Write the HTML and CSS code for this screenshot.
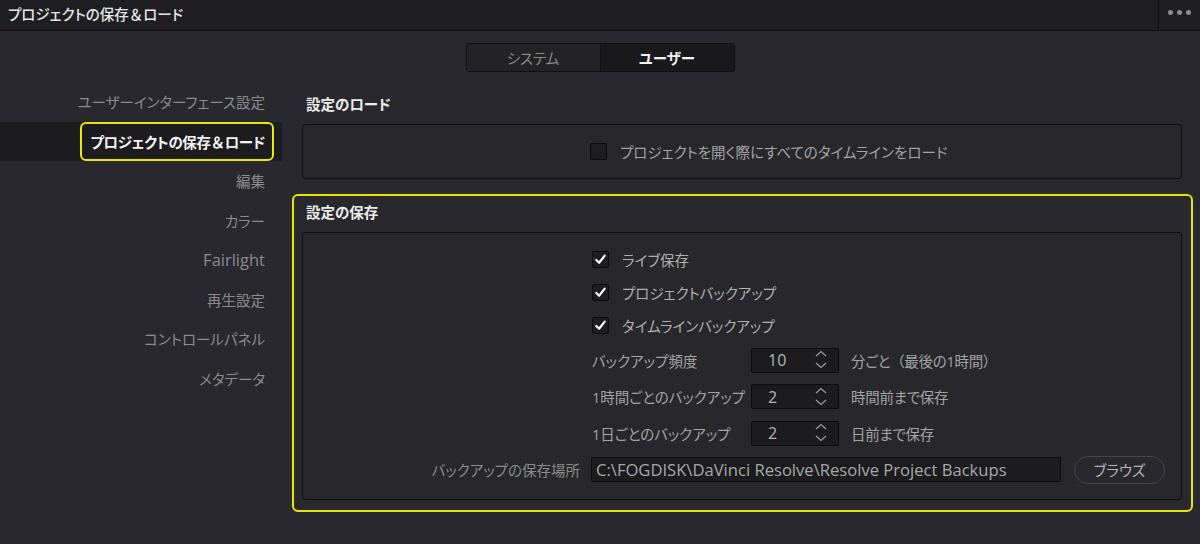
FILE: index.html
```html
<!DOCTYPE html>
<html lang="ja">
<head>
<meta charset="utf-8">
<link rel="stylesheet" href="styles.css">
</head>
<body>
<div class="app">
  <header class="titlebar">
    <div class="title">プロジェクトの保存<span class="amp">＆</span>ロード</div>
    <div class="menu"><span class="dot"></span><span class="dot"></span><span class="dot"></span></div>
  </header>
  <div class="tabs-row">
    <div class="tabs">
      <div class="tab">システム</div>
      <div class="tab active">ユーザー</div>
    </div>
  </div>
  <div class="main">
    <nav class="sidebar">
      <div class="nav-item">ユーザーインターフェース設定</div>
      <div class="nav-item selected"><span class="sel-box">プロジェクトの保存<span class="amp">＆</span>ロード</span></div>
      <div class="nav-item">編集</div>
      <div class="nav-item">カラー</div>
      <div class="nav-item latin">Fairlight</div>
      <div class="nav-item">再生設定</div>
      <div class="nav-item">コントロールパネル</div>
      <div class="nav-item">メタデータ</div>
    </nav>
    <div class="content">
      <section class="section">
        <h2 class="section-title">設定のロード</h2>
        <div class="box box-load">
          <div class="row check-row">
            <div class="label-col"></div>
            <span class="checkbox"></span>
            <span class="check-text">プロジェクトを開く際にすべてのタイムラインをロード</span>
          </div>
        </div>
      </section>
      <section class="section highlight">
        <h2 class="section-title">設定の保存</h2>
        <div class="box box-save">
          <div class="row check-row">
            <div class="label-col"></div>
            <span class="checkbox checked"><svg viewBox="0 0 16 16" class="tick"><path d="M3.5 8.5 L6.5 11.5 L12.5 3.8" /></svg></span>
            <span class="check-text">ライブ保存</span>
          </div>
          <div class="row check-row">
            <div class="label-col"></div>
            <span class="checkbox checked"><svg viewBox="0 0 16 16" class="tick"><path d="M3.5 8.5 L6.5 11.5 L12.5 3.8" /></svg></span>
            <span class="check-text">プロジェクトバックアップ</span>
          </div>
          <div class="row check-row">
            <div class="label-col"></div>
            <span class="checkbox checked"><svg viewBox="0 0 16 16" class="tick"><path d="M3.5 8.5 L6.5 11.5 L12.5 3.8" /></svg></span>
            <span class="check-text">タイムラインバックアップ</span>
          </div>
          <div class="row spin-row">
            <div class="label-col"></div>
            <span class="spin-label">バックアップ頻度</span>
            <div class="spin"><span class="spin-val">10</span><svg class="arrows" viewBox="0 0 16 22"><path d="M3 7 L8 2.5 L13 7 M3 14 L8 18.5 L13 14"/></svg></div>
            <span class="suffix">分ごと<span class="amp">（</span>最後の1時間<span class="amp">）</span></span>
          </div>
          <div class="row spin-row">
            <div class="label-col"></div>
            <span class="spin-label">1時間ごとのバックアップ</span>
            <div class="spin"><span class="spin-val">2</span><svg class="arrows" viewBox="0 0 16 22"><path d="M3 7 L8 2.5 L13 7 M3 14 L8 18.5 L13 14"/></svg></div>
            <span class="suffix">時間前まで保存</span>
          </div>
          <div class="row spin-row">
            <div class="label-col"></div>
            <span class="spin-label">1日ごとのバックアップ</span>
            <div class="spin"><span class="spin-val">2</span><svg class="arrows" viewBox="0 0 16 22"><path d="M3 7 L8 2.5 L13 7 M3 14 L8 18.5 L13 14"/></svg></div>
            <span class="suffix">日前まで保存</span>
          </div>
          <div class="row path-row">
            <div class="label-col path-label">バックアップの保存場所</div>
            <div class="path-input">C:\FOGDISK\DaVinci Resolve\Resolve Project Backups</div>
            <button class="browse">ブラウズ</button>
          </div>
        </div>
      </section>
    </div>
  </div>
</div>
</body>
</html>
```
FILE: styles.css
```css
* { box-sizing: border-box; }
html, body { margin: 0; padding: 0; }
body {
  width: 1200px;
  height: 544px;
  overflow: hidden;
  background: #28282e;
  font-family: "Open Sans", "Noto Sans CJK JP", sans-serif;
  font-size: 14px;
  font-feature-settings: "palt";
  color: #9c9c9c;
}
.app { width: 1200px; height: 544px; }
.amp { font-family: "Noto Sans CJK JP", sans-serif; font-feature-settings: normal; }

.titlebar {
  height: 31px;
  background: #1f1f23;
  border-bottom: 1px solid #0e0e10;
  display: flex;
  align-items: stretch;
}
.title {
  flex: 1;
  padding-left: 8px;
  line-height: 28px;
  color: #e6e6e6;
  font-size: 14.5px;
  font-weight: 500;
}
.menu {
  width: 42px;
  border-left: 1px solid #0e0e10;
  display: flex;
  align-items: center;
  justify-content: center;
  gap: 4px;
  padding-bottom: 5px;
}
.dot { width: 5px; height: 5px; border-radius: 50%; background: #8d8d8f; }

.tabs-row { display: flex; justify-content: center; padding-top: 12px; }
.tabs {
  display: flex;
  width: 269px;
  height: 29px;
  border: 1px solid #101012;
  border-radius: 3px;
  overflow: hidden;
}
.tab {
  flex: 1;
  display: flex;
  align-items: center;
  justify-content: center;
  background: #232327;
  color: #8a8a8c;
  font-size: 14.5px;
}
.tab.active {
  background: #19191b;
  color: #f2f2f2;
  font-weight: 700;
  border-left: 1px solid #101012;
}

.main { display: flex; padding-top: 10px; }
.sidebar { width: 282px; }
.nav-item {
  height: 39.5px;
  display: flex;
  align-items: center;
  justify-content: flex-end;
  padding-right: 17px;
  color: #8c8c8e;
  font-size: 14.5px;
}
.nav-item.latin { font-size: 16.5px; }
.nav-item.selected {
  background: #1c1c1f;
  padding-right: 8px;
}
.sel-box {
  display: flex;
  align-items: center;
  height: 39px;
  padding: 0 7px 0 8px;
  border: 2px solid #e8e800;
  border-radius: 6px;
  color: #f4f4f4;
  font-weight: 700;
  letter-spacing: -0.4px;
}

.content { width: 901px; margin-left: 10px; padding-top: 4px; }
.section {
  border: 2px solid transparent;
  border-radius: 6px;
  padding: 0 9px 10px 8px;
}
.section.highlight { border-color: #e6e600; margin-top: 3px; }
.section-title {
  margin: 0;
  height: 36px;
  padding: 0 0 5px 4px;
  display: flex;
  align-items: center;
  font-size: 14.5px;
  font-weight: 700;
  color: #ececec;
}
.box {
  border: 1px solid #0f0f11;
  border-radius: 3px;
  background: #27272c;
}
.box-load { height: 55px; display: flex; align-items: center; }
.box-save { padding-top: 10px; height: 268px; }

.row { display: flex; align-items: center; white-space: nowrap; }
.label-col { width: 288px; flex: none; }
.check-row { height: 33px; }
.box-load .check-row { height: auto; }
.box-load .label-col { width: 287px; }
.checkbox {
  width: 17px; height: 17px;
  background: #1e1e21;
  border: 1px solid #0c0c0e;
  border-radius: 2px;
  margin-right: 13px;
  display: flex;
  align-items: center;
  justify-content: center;
}
.box-save .checkbox { margin-left: 1px; }
.tick { width: 15px; height: 15px; fill: none; stroke: #ffffff; stroke-width: 2.3; stroke-linecap: round; stroke-linejoin: round; }
.check-text { color: #a4a4a6; font-size: 14.5px; }
.box-save .check-text { color: #b0b0b2; }

.spin-row { height: 36.5px; }
.spin-label { width: 160px; flex: none; color: #a4a4a6; font-size: 14.5px; padding-left: 1px; }
.spin {
  width: 88px; height: 25px;
  background: #1c1c1f;
  border: 1px solid #0c0c0e;
  border-radius: 2px;
  display: flex;
  align-items: center;
  justify-content: space-between;
  padding: 0 9px 0 16px;
}
.spin-val { color: #b4b4b6; font-size: 16px; }
.arrows { width: 16px; height: 22px; fill: none; stroke: #9a9a9c; stroke-width: 1.3; }
.suffix { margin-left: 12px; color: #a4a4a6; font-size: 14.5px; letter-spacing: -0.3px; }

.path-row { height: 36px; }
.path-label { text-align: right; padding-right: 11px; color: #8c8c8e; font-size: 14.5px; }
.path-input {
  width: 470px; height: 25px;
  background: #1c1c1f;
  border: 1px solid #0c0c0e;
  border-radius: 2px;
  padding-left: 4px;
  display: flex;
  align-items: center;
  color: #a8a8aa;
  font-size: 16.6px;
  white-space: nowrap;
}
.browse {
  margin-left: 13px;
  width: 91px; height: 28px;
  border: 1px solid #46464b;
  border-radius: 14px;
  background: #28282e;
  color: #b4b4b6;
  font-family: "Noto Sans CJK JP", sans-serif;
  font-feature-settings: "palt";
  font-size: 14.5px;
  padding: 0;
}
```
